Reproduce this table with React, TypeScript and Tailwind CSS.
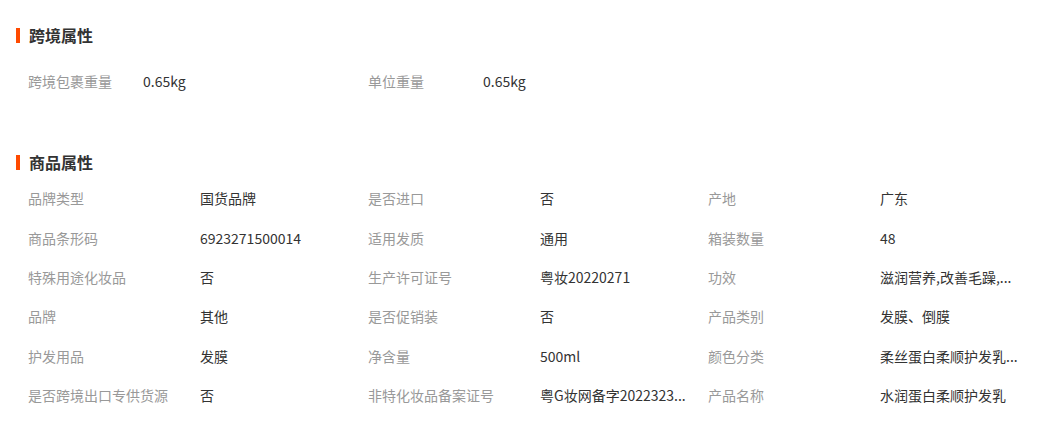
import React from "react";

type Attr = { label: string; value: string };

const crossBorder: Attr[] = [
  { label: "跨境包裹重量", value: "0.65kg" },
  { label: "单位重量", value: "0.65kg" },
];

const productAttrs: Attr[] = [
  { label: "品牌类型", value: "国货品牌" },
  { label: "是否进口", value: "否" },
  { label: "产地", value: "广东" },
  { label: "商品条形码", value: "6923271500014" },
  { label: "适用发质", value: "通用" },
  { label: "箱装数量", value: "48" },
  { label: "特殊用途化妆品", value: "否" },
  { label: "生产许可证号", value: "粤妆20220271" },
  { label: "功效", value: "滋润营养,改善毛躁,..." },
  { label: "品牌", value: "其他" },
  { label: "是否促销装", value: "否" },
  { label: "产品类别", value: "发膜、倒膜" },
  { label: "护发用品", value: "发膜" },
  { label: "净含量", value: "500ml" },
  { label: "颜色分类", value: "柔丝蛋白柔顺护发乳..." },
  { label: "是否跨境出口专供货源", value: "否" },
  { label: "非特化妆品备案证号", value: "粤G妆网备字2022323..." },
  { label: "产品名称", value: "水润蛋白柔顺护发乳" },
];

const SectionTitle = ({ title }: { title: string }) => (
  <div className="flex items-center h-5 pl-4">
    <span className="w-[4px] h-[15px] bg-[#ff4a00]" />
    <span className="ml-[9px] text-[16px] leading-5 font-bold text-[#333]">{title}</span>
  </div>
);

const Cell = ({ attr, labelWidth }: { attr: Attr; labelWidth: string }) => (
  <div className="flex items-center w-[340px] h-full">
    <span className={`${labelWidth} shrink-0 text-[#999]`}>{attr.label}</span>
    <span className="whitespace-nowrap text-[#333]">{attr.value}</span>
  </div>
);

export default function App() {
  // 3개씩 한 줄
  const rows: Attr[][] = [];
  for (let i = 0; i < productAttrs.length; i += 3) {
    rows.push(productAttrs.slice(i, i + 3));
  }

  return (
    <div
      className="w-[1058px] h-[424px] bg-white text-[14px] overflow-hidden"
      style={{ fontFamily: '"Noto Sans CJK SC", "Noto Sans", sans-serif' }}
    >
      {/* 跨境属性 */}
      <div className="pt-[25px]">
        <SectionTitle title="跨境属性" />
        <div className="flex pl-[28px] mt-[16px] h-10">
          {crossBorder.map((a) => (
            <Cell key={a.label} attr={a} labelWidth="w-[115px]" />
          ))}
        </div>
      </div>

      {/* 商品属性 */}
      <div className="mt-[51px]">
        <SectionTitle title="商品属性" />
        <div className="pl-[28px] mt-[7px]">
          {rows.map((row, i) => (
            <div key={i} className="flex h-[39.4px]">
              {row.map((a) => (
                <Cell key={a.label} attr={a} labelWidth="w-[172px]" />
              ))}
            </div>
          ))}
        </div>
      </div>
    </div>
  );
}
